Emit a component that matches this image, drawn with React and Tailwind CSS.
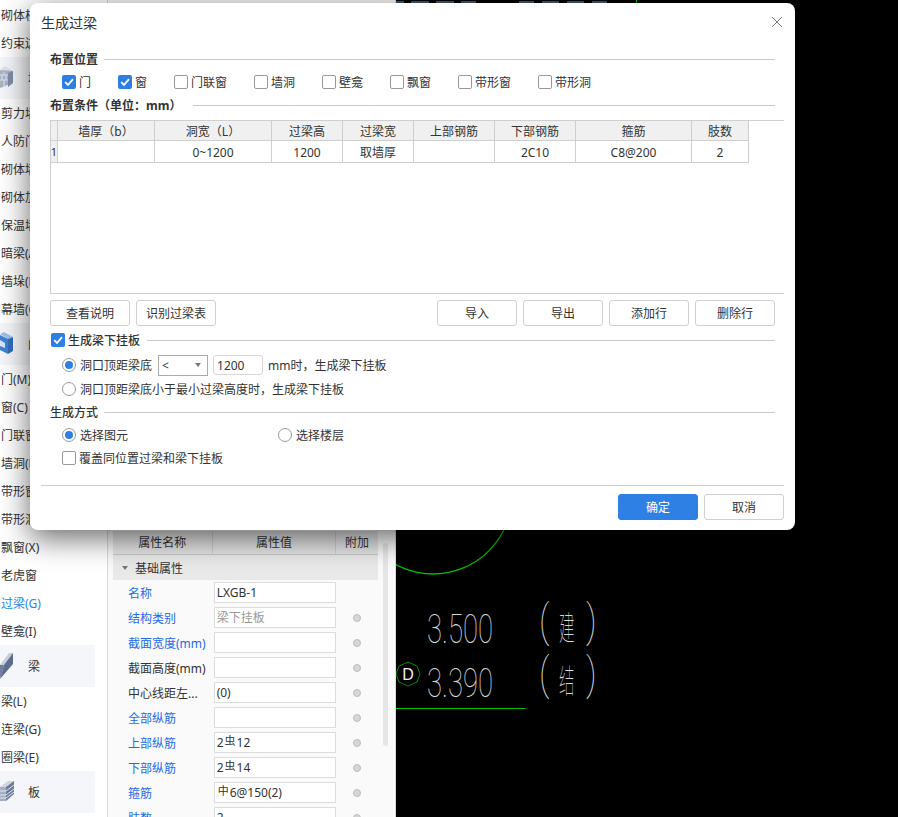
import React from "react";

const FONT = { fontFamily: '"Noto Sans", "Noto Sans CJK SC", sans-serif' };

function WallIcon() {
  return (
    <svg width="14" height="24" viewBox="0 0 14 24" className="shrink-0">
      <polygon points="0,3 5,0 13,5 8,6" fill="#dde3ec" />
      <polygon points="0,4 13,5 13,17 0,22" fill="#aab4c4" />
      <polygon points="8,7 13,5 13,17 8,21" fill="#7e8ca6" />
      <path d="M0 9H8M0 14H8M4 6V9M2 9V14M6 9V14M4 14V20" stroke="#dfe4ec" strokeWidth="1" fill="none" />
    </svg>
  );
}
function DoorIcon() {
  return (
    <svg width="14" height="24" viewBox="0 0 14 24" className="shrink-0">
      <polygon points="0,2 4,0 13,5 8,7" fill="#9cc2ea" />
      <polygon points="0,3 8,7 8,22 0,18" fill="#3f82d0" />
      <polygon points="8,7 13,5 13,19 8,22" fill="#2f6db8" />
      <polygon points="0,8 5,11 5,16 0,14" fill="#d5e5f5" />
    </svg>
  );
}
function BeamIcon() {
  return (
    <svg width="14" height="28" viewBox="0 0 14 28" className="shrink-0">
      <polygon points="0,13 9,1 13,1 4,13" fill="#c6cedb" />
      <polygon points="0,13 4,13 0,27" fill="#6e7e9c" />
      <polygon points="4,13 13,1 13,12 0,27" fill="#5d6d8d" />
    </svg>
  );
}
function SlabIcon() {
  return (
    <svg width="15" height="22" viewBox="0 0 15 22" className="shrink-0">
      <polygon points="0,6 6,6 14,0 8,0" fill="#cfd6e2" />
      <polygon points="0,6 6,6 6,20 0,20" fill="#a3afc4" />
      <polygon points="6,6 14,0 14,13 6,20" fill="#69799a" />
      <path d="M0 10H6L14 4M0 14H6L14 8M0 17H6L14 11" stroke="#e3e7ee" strokeWidth="1" fill="none" />
    </svg>
  );
}

function SideItem({ children, blue }) {
  return (
    <div className={`flex h-[28px] items-center whitespace-nowrap pl-px pt-[2px] text-xs ${blue ? "text-[#1e88e5]" : "text-[#333]"}`}>
      {children}
    </div>
  );
}
function SideGroup({ icon, label }) {
  return (
    <div className="flex h-[42px] w-[95px] items-center bg-[#f4f6f9] text-xs text-[#333]">
      <div className="flex w-[28px] items-center">{icon}</div>
      <span className="pt-[2px]">{label}</span>
    </div>
  );
}

function Sidebar() {
  return (
    <div className="h-full w-[108px] shrink-0 overflow-hidden border-r border-[#d9d9d9] bg-white pt-px">
      <SideItem>砌体柱(Z)</SideItem>
      <SideItem>约束边缘</SideItem>
      <SideGroup icon={<WallIcon />} label="墙" />
      <SideItem>剪力墙(Q)</SideItem>
      <SideItem>人防门框墙</SideItem>
      <SideItem>砌体墙(Q)</SideItem>
      <SideItem>砌体加筋</SideItem>
      <SideItem>保温墙(Q)</SideItem>
      <SideItem>暗梁(A)</SideItem>
      <SideItem>墙垛(E)</SideItem>
      <SideItem>幕墙(Q)</SideItem>
      <SideGroup icon={<DoorIcon />} label="门窗洞" />
      <SideItem>门(M)</SideItem>
      <SideItem>窗(C)</SideItem>
      <SideItem>门联窗(A)</SideItem>
      <SideItem>墙洞(D)</SideItem>
      <SideItem>带形窗</SideItem>
      <SideItem>带形洞</SideItem>
      <SideItem>飘窗(X)</SideItem>
      <SideItem>老虎窗</SideItem>
      <SideItem blue>过梁(G)</SideItem>
      <SideItem>壁龛(I)</SideItem>
      <SideGroup icon={<BeamIcon />} label="梁" />
      <SideItem>梁(L)</SideItem>
      <SideItem>连梁(G)</SideItem>
      <SideItem>圈梁(E)</SideItem>
      <SideGroup icon={<SlabIcon />} label="板" />
    </div>
  );
}

function Bar({ children }) {
  return <span className="relative -top-[2px] mx-px text-[11px]">{children}</span>;
}

const PROPS = [
  { label: "名称", blue: true, value: "LXGB-1", noDot: true },
  { label: "结构类别", blue: true, value: "梁下挂板", muted: true },
  { label: "截面宽度(mm)", blue: true, value: "" },
  { label: "截面高度(mm)", value: "" },
  { label: "中心线距左...", value: "(0)" },
  { label: "全部纵筋", blue: true, value: "" },
  { label: "上部纵筋", blue: true, value: <>2<Bar>虫</Bar>12</> },
  { label: "下部纵筋", blue: true, value: <>2<Bar>虫</Bar>14</> },
  { label: "箍筋", blue: true, value: <><Bar>中</Bar>6@150(2)</> },
  { label: "肢数", blue: true, value: "2" },
];

function PropRow({ p }) {
  return (
    <div className="flex h-[25px] shrink-0 items-center text-xs">
      <span className={`w-[101px] whitespace-nowrap pl-[15px] pt-[2px] ${p.blue ? "text-[#1f6aea]" : "text-[#333]"}`}>{p.label}</span>
      <div className={`flex h-[21px] w-[123px] items-center border border-[#dcdcdc] bg-white pl-[2px] pt-px ${p.muted ? "text-[#999]" : "text-[#333]"}`}>
        {p.value}
      </div>
      <div className="flex w-[42px] justify-center">
        {!p.noDot && <span className="h-[8px] w-[8px] rounded-full border border-[#bdbdbd] bg-[#d6d6d6]" />}
      </div>
    </div>
  );
}

function PropertyPanel() {
  return (
    <div className="flex h-full w-[288px] shrink-0 bg-[#fafafa]">
      <div className="ml-[5px] flex w-[266px] flex-col overflow-hidden pt-[531px]">
        <div className="flex h-[24px] shrink-0 border-b border-[#c9c9c9] bg-[#e6e6e6] text-center text-xs leading-[24px] text-[#333]">
          <span className="w-[100px] border-r border-[#d0d0d0]">属性名称</span>
          <span className="w-[124px] border-r border-[#d0d0d0]">属性值</span>
          <span className="w-[42px]">附加</span>
        </div>
        <div className="flex h-[25px] shrink-0 items-center bg-[#e9e9e9] text-xs text-[#333]">
          <span className="ml-[9px] mr-[7px] h-0 w-0 border-x-[3px] border-t-[4px] border-x-transparent border-t-[#777]" />
          <span className="pt-[2px]">基础属性</span>
        </div>
        {PROPS.map((p) => (
          <PropRow key={p.label} p={p} />
        ))}
      </div>
      <div className="ml-[5px] w-[12px] shrink-0 pt-[543px]">
        <div className="h-[203px] w-[5px] rounded-full bg-[#e6e6e6]" />
      </div>
      <div className="w-px shrink-0 bg-[#dcdcdc]" />
    </div>
  );
}

function Canvas() {
  const strip = [
    [396, 8], [411, 18], [436, 18], [461, 15], [519, 15], [542, 17], [567, 17], [592, 15],
  ];
  return (
    <div className="relative h-full flex-1 bg-black">
      <svg width="502" height="817" viewBox="396 0 502 817" className="block">
        {strip.map(([x, w]) => (
          <rect key={x} x={x} y="1" width={w} height="2" fill="#3d5a73" />
        ))}
        <rect x="636" y="0" width="1" height="3" fill="#00c000" />
        <circle cx="433" cy="495" r="79" fill="none" stroke="#00c000" strokeWidth="1.3" />
        <line x1="396" y1="708.5" x2="526" y2="708.5" stroke="#00c000" strokeWidth="1" />
        <polygon points="408,662 417,666 420,674 417,682 408,686 399,682 396,674 399,666" fill="none" stroke="#008a00" strokeWidth="1" />
        <text x="408" y="680" textAnchor="middle" fontSize="16" fill="#eee" style={{ fontFamily: '"Liberation Sans", sans-serif' }}>D</text>
        <g fill="#d8d8d8" style={{ fontFamily: 'Roboto, "Noto Sans CJK SC", sans-serif', fontWeight: 100 }}>
          <text transform="translate(427 643) scale(0.67 1)" fontSize="41">3.500</text>
          <text transform="translate(427 697) scale(0.67 1)" fontSize="41">3.390</text>
          <text transform="translate(539 636) scale(0.8 1)" fontSize="44">(</text>
          <text transform="translate(586 636) scale(0.8 1)" fontSize="44">)</text>
          <text transform="translate(539 689) scale(0.8 1)" fontSize="44">(</text>
          <text transform="translate(586 689) scale(0.8 1)" fontSize="44">)</text>
          <text transform="translate(559 640) scale(0.47 1)" fontSize="33">建</text>
          <text transform="translate(559 693) scale(0.47 1)" fontSize="33">结</text>
        </g>
      </svg>
    </div>
  );
}

function Check({ checked }) {
  return checked ? (
    <span className="flex h-[14px] w-[14px] shrink-0 items-center justify-center rounded-[2px] bg-[#2e7fe4]">
      <svg width="12" height="12" viewBox="0 0 12 12">
        <path d="M2.2 6.2 5 9 10 3.2" fill="none" stroke="#fff" strokeWidth="1.8" />
      </svg>
    </span>
  ) : (
    <span className="h-[14px] w-[14px] shrink-0 rounded-[2px] border border-[#999] bg-white" />
  );
}
function Radio({ checked }) {
  return (
    <span className="flex h-[14px] w-[14px] shrink-0 items-center justify-center rounded-full border border-[#999] bg-white">
      {checked && <span className="h-[8px] w-[8px] rounded-full bg-[#2e7fe4]" />}
    </span>
  );
}

function Section({ title, gap = "ml-[6px]", strong, check }) {
  return (
    <div className="flex h-[22px] items-center text-xs text-[#333]">
      {check && <span className="ml-px mr-[3px]"><Check checked /></span>}
      <span className={`pt-[2px] ${strong ? "font-bold" : "font-medium"}`}>{title}</span>
      <span className={`h-px flex-1 bg-[#c8c8c8] ${gap}`} />
    </div>
  );
}

function Btn({ children, primary, className = "" }) {
  return (
    <button
      className={`h-[26px] w-[80px] rounded-[3px] border pt-[2px] text-xs ${primary ? "border-[#2f80e4] bg-[#2f80e4] text-white" : "border-[#d0d0d0] bg-white text-[#333]"} ${className}`}
    >
      {children}
    </button>
  );
}

const CHECKS = [
  { t: "门", on: true, w: "w-[56px]" },
  { t: "窗", on: true, w: "w-[56px]" },
  { t: "门联窗", w: "w-[80px]" },
  { t: "墙洞", w: "w-[68px]" },
  { t: "壁龛", w: "w-[68px]" },
  { t: "飘窗", w: "w-[68px]" },
  { t: "带形窗", w: "w-[80px]" },
  { t: "带形洞", w: "w-[80px]" },
];

const COLS = [
  { w: "w-[7px]", head: "", cell: "1" },
  { w: "w-[97px]", head: "墙厚（b）", cell: "" },
  { w: "w-[117px]", head: "洞宽（L）", cell: "0~1200" },
  { w: "w-[71px]", head: "过梁高", cell: "1200" },
  { w: "w-[71px]", head: "过梁宽", cell: "取墙厚" },
  { w: "w-[81px]", head: "上部钢筋", cell: "" },
  { w: "w-[81px]", head: "下部钢筋", cell: "2C10" },
  { w: "w-[116px]", head: "箍筋", cell: "C8@200" },
  { w: "w-[57px]", head: "肢数", cell: "2" },
];

function Grid() {
  return (
    <div className="mr-[-9px] mt-[4px] h-[174px] border-y border-l border-[#cfcfcf] text-xs text-[#333]">
      <div className="flex h-[20px]">
        {COLS.map((c, i) => (
          <div key={i} className={`${c.w} flex shrink-0 items-center justify-center whitespace-nowrap border-r border-b border-[#cfcfcf] bg-[#f0f0f0] pt-[2px]`}>
            {c.head}
          </div>
        ))}
      </div>
      <div className="flex h-[22px]">
        {COLS.map((c, i) => (
          <div key={i} className={`${c.w} flex shrink-0 items-center justify-center overflow-hidden whitespace-nowrap border-r border-b border-[#cfcfcf] pt-[2px] ${i === 0 ? "bg-[#f0f0f0] text-[11px]" : "bg-white"}`}>
            {c.cell}
          </div>
        ))}
      </div>
    </div>
  );
}

function Dialog() {
  return (
    <div className="absolute left-[30px] top-[3px] flex h-[527px] w-[765px] flex-col rounded-[8px] bg-white shadow-[0_8px_30px_rgba(0,0,0,0.6)]">
      <div className="flex h-[38px] shrink-0 items-center justify-between pl-[11px] pr-[13px] text-sm text-[#333]">
        <span className="pt-[2px]">生成过梁</span>
        <svg width="10" height="10" viewBox="0 0 10 10">
          <path d="M0 0 10 10M10 0 0 10" stroke="#777" strokeWidth="1" />
        </svg>
      </div>
      <div className="mt-[7px] px-[20px]">
        <Section title="布置位置" strong />
        <div className="mt-px flex h-[22px] items-center pl-[12px] text-xs text-[#333]">
          {CHECKS.map((c) => (
            <div key={c.t} className={`${c.w} flex shrink-0 items-center gap-[3px]`}>
              <Check checked={c.on} />
              <span className="pt-[2px]">{c.t}</span>
            </div>
          ))}
        </div>
        <div className="mt-px">
          <Section title="布置条件（单位：mm）" strong gap="ml-[12px]" />
        </div>
        <Grid />
        <div className="mt-[6px] flex">
          <Btn>查看说明</Btn>
          <Btn className="ml-[6px]">识别过梁表</Btn>
          <Btn className="ml-auto">导入</Btn>
          <Btn className="ml-[6px]">导出</Btn>
          <Btn className="ml-[6px]">添加行</Btn>
          <Btn className="ml-[6px]">删除行</Btn>
        </div>
        <div className="mt-[3px]">
          <Section title="生成梁下挂板" check gap="ml-[7px]" />
        </div>
        <div className="mt-[3px] flex h-[22px] items-center pl-[12px] text-xs text-[#333]">
          <Radio checked />
          <span className="ml-[4px] pt-[2px]">洞口顶距梁底</span>
          <div className="ml-[6px] flex h-[21px] w-[50px] items-center justify-between border border-[#aaa] pl-[3px] pr-[6px]">
            <span className="pt-[2px]">&lt;</span>
            <span className="h-0 w-0 border-x-[3px] border-t-[4px] border-x-transparent border-t-[#777]" />
          </div>
          <div className="ml-[5px] flex h-[20px] w-[50px] items-center rounded-[3px] border border-[#d8d8d8] pl-[3px] pt-[2px]">1200</div>
          <span className="ml-[5px] pt-[2px]">mm时，生成梁下挂板</span>
        </div>
        <div className="mt-[2px] flex h-[22px] items-center pl-[12px] text-xs text-[#333]">
          <Radio />
          <span className="ml-[4px] pt-[2px]">洞口顶距梁底小于最小过梁高度时，生成梁下挂板</span>
        </div>
        <div className="mt-px">
          <Section title="生成方式" />
        </div>
        <div className="mt-px flex h-[22px] items-center pl-[12px] text-xs text-[#333]">
          <div className="flex w-[216px] items-center gap-[4px]">
            <Radio checked />
            <span className="pt-[2px]">选择图元</span>
          </div>
          <div className="flex items-center gap-[4px]">
            <Radio />
            <span className="pt-[2px]">选择楼层</span>
          </div>
        </div>
        <div className="mt-px flex h-[22px] items-center gap-[3px] pl-[12px] text-xs text-[#333]">
          <Check />
          <span className="pt-[2px]">覆盖同位置过梁和梁下挂板</span>
        </div>
      </div>
      <div className="mx-[11px] mt-auto flex h-[45px] shrink-0 justify-end gap-[6px] border-t border-[#cfcfcf] pt-[8px]">
        <Btn primary>确定</Btn>
        <Btn>取消</Btn>
      </div>
    </div>
  );
}

export default function App() {
  return (
    <div className="relative flex h-[817px] w-[898px] overflow-hidden bg-black" style={FONT}>
      <Sidebar />
      <PropertyPanel />
      <Canvas />
      <Dialog />
    </div>
  );
}
